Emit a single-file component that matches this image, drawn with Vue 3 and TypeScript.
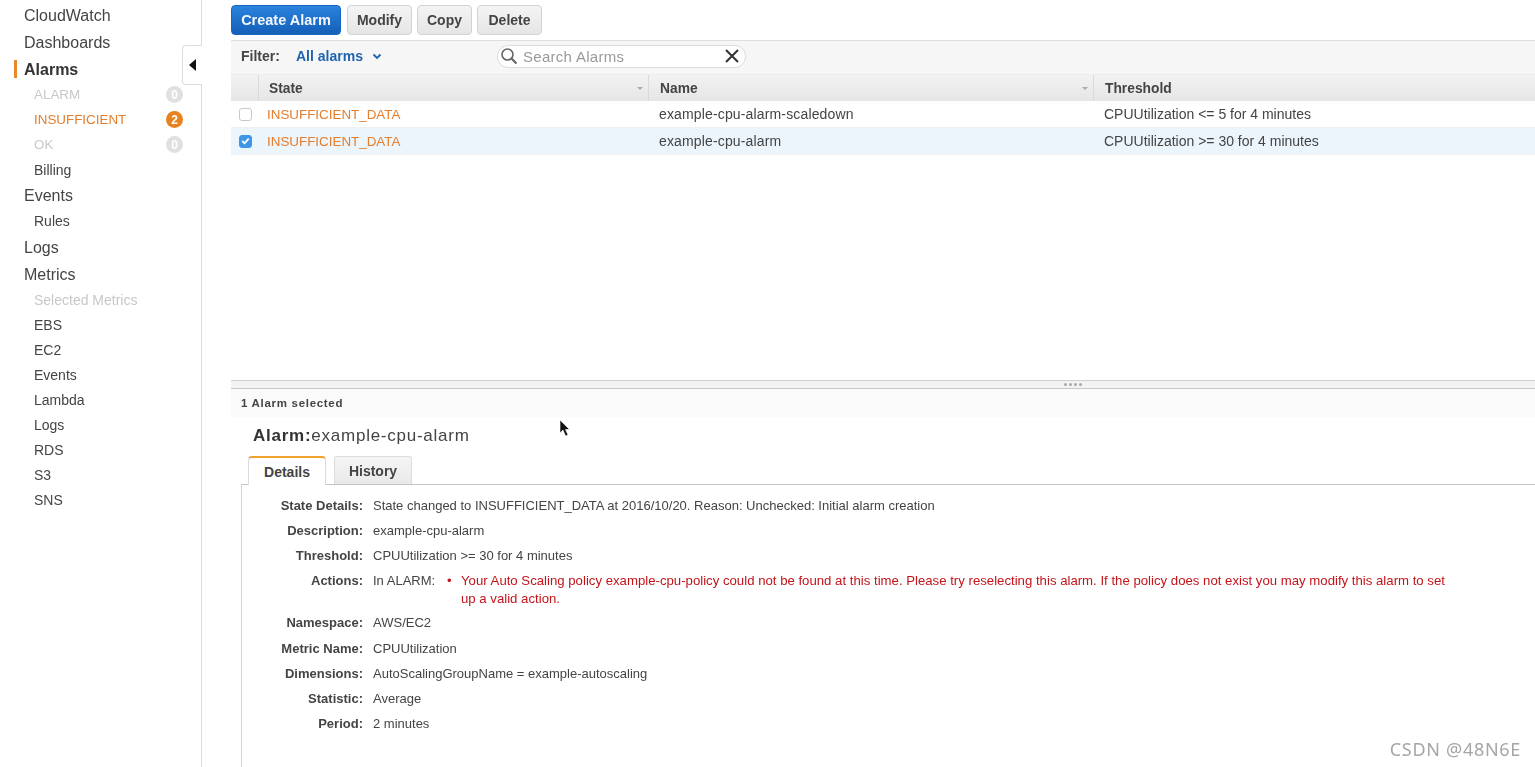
<script setup lang="ts">
interface Nav { label: string; kind: string; badge?: string }
const nav: Nav[] = [
  { label: 'CloudWatch', kind: 'top' },
  { label: 'Dashboards', kind: 'top' },
  { label: 'Alarms', kind: 'top low cur' },
  { label: 'ALARM', kind: 'sub muted caps', badge: '0' },
  { label: 'INSUFFICIENT', kind: 'sub warn caps', badge: '2' },
  { label: 'OK', kind: 'sub muted caps', badge: '0' },
  { label: 'Billing', kind: 'sub' },
  { label: 'Events', kind: 'top low' },
  { label: 'Rules', kind: 'sub high' },
  { label: 'Logs', kind: 'top low' },
  { label: 'Metrics', kind: 'top low' },
  { label: 'Selected Metrics', kind: 'sub high muted' },
  { label: 'EBS', kind: 'sub high' },
  { label: 'EC2', kind: 'sub high' },
  { label: 'Events', kind: 'sub high' },
  { label: 'Lambda', kind: 'sub high' },
  { label: 'Logs', kind: 'sub high' },
  { label: 'RDS', kind: 'sub high' },
  { label: 'S3', kind: 'sub high' },
  { label: 'SNS', kind: 'sub high' },
]
const alarms = [
  { name: 'example-cpu-alarm-scaledown', threshold: 'CPUUtilization <= 5 for 4 minutes', selected: false },
  { name: 'example-cpu-alarm', threshold: 'CPUUtilization >= 30 for 4 minutes', selected: true },
]
const before = [
  { k: 'State Details:', v: 'State changed to INSUFFICIENT_DATA at 2016/10/20. Reason: Unchecked: Initial alarm creation' },
  { k: 'Description:', v: 'example-cpu-alarm' },
  { k: 'Threshold:', v: 'CPUUtilization >= 30 for 4 minutes' },
]
const after = [
  { k: 'Namespace:', v: 'AWS/EC2' },
  { k: 'Metric Name:', v: 'CPUUtilization' },
  { k: 'Dimensions:', v: 'AutoScalingGroupName = example-autoscaling' },
  { k: 'Statistic:', v: 'Average' },
  { k: 'Period:', v: '2 minutes' },
]
</script>

<template>
  <div class="page">
    <aside class="sidebar">
      <div v-for="(n, i) in nav" :key="i" class="nav" :class="n.kind">
        <span>{{ n.label }}</span>
        <span v-if="n.badge" class="badge">{{ n.badge }}</span>
      </div>
      <div class="collapse"><i class="tri"></i></div>
    </aside>

    <main class="main">
      <div class="toolbar">
        <button class="btn primary">Create Alarm</button>
        <button class="btn modify">Modify</button>
        <button class="btn copy">Copy</button>
        <button class="btn delete">Delete</button>
      </div>

      <div class="filter">
        <b class="flabel">Filter:</b>
        <span class="fvalue">All alarms</span>
        <svg class="chev" width="10" height="7" viewBox="0 0 10 7"><path d="M1.5 1.5 5 5l3.500-3.500" fill="none" stroke="#1f63b0" stroke-width="1.800"/></svg>
        <div class="search">
          <svg width="18" height="18" viewBox="0 0 18 18"><circle cx="7.500" cy="7.500" r="5.500" fill="none" stroke="#666" stroke-width="1.600"/><path d="m11.500 11.500 5 5" stroke="#666" stroke-width="2.200"/></svg>
          <span class="ph">Search Alarms</span>
          <svg class="x" width="14" height="14" viewBox="0 0 14 14"><path d="m1 1 12 12M13 1 1 13" stroke="#333" stroke-width="2"/></svg>
        </div>
      </div>

      <div class="thead">
        <div class="c0"></div>
        <div class="c1 th">State<i class="sort"></i></div>
        <div class="c2 th">Name<i class="sort"></i></div>
        <div class="c3 th">Threshold</div>
      </div>
      <div v-for="a in alarms" :key="a.name" class="row" :class="{ sel: a.selected }">
        <div class="c0">
          <span class="check" :class="{ on: a.selected }">
            <svg v-if="a.selected" width="12" height="12" viewBox="0 0 12 12"><path d="m2.500 6 2.500 2.500 4.500-5" fill="none" stroke="#fff" stroke-width="2"/></svg>
          </span>
        </div>
        <div class="c1 state">INSUFFICIENT_DATA</div>
        <div class="c2 name">{{ a.name }}</div>
        <div class="c3 thr">{{ a.threshold }}</div>
      </div>

      <div class="spacer"></div>

      <div class="splitter"><span class="grip"><i></i><i></i><i></i><i></i></span></div>
      <div class="selected-bar">1 Alarm selected</div>

      <h2 class="title"><b>Alarm:</b>example-cpu-alarm</h2>
      <div class="tabs">
        <div class="tab on">Details</div>
        <div class="tab">History</div>
      </div>

      <section class="panel">
        <div v-for="d in before" :key="d.k" class="kv">
          <b>{{ d.k }}</b><span>{{ d.v }}</span>
        </div>
        <div class="kv actions">
          <b>Actions:</b>
          <span class="in">In ALARM:</span>
          <span class="dot">•</span>
          <span class="err">Your Auto Scaling policy example-cpu-policy could not be found at this time. Please try reselecting this alarm. If the policy does not exist you may modify this alarm to set up a valid action.</span>
        </div>
        <div v-for="d in after" :key="d.k" class="kv">
          <b>{{ d.k }}</b><span>{{ d.v }}</span>
        </div>
      </section>
    </main>

    <svg class="cursor" width="12" height="19" viewBox="0 0 12 19"><path d="M1 1v13l3-3 2.500 6 2.500-1-2.500-5.500H10.500z" fill="#111" stroke="#fff" stroke-width=".6"/></svg>
    <div class="watermark">CSDN @48N6E</div>
  </div>
</template>

<style>
html, body { margin: 0; background: #fff; overflow: hidden; }
</style>

<style scoped>
.page {
  position: relative; display: flex; height: 767px; width: 1535px; overflow: hidden;
  font-family: "Liberation Sans", Arial, sans-serif; color: #333; background: #fff;
}
.sidebar {
  position: relative; box-sizing: border-box; width: 202px; flex: none;
  border-right: 1px solid #dcdcdc; padding-top: 2px; filter: blur(.35px);
}
.nav { display: flex; align-items: center; justify-content: space-between; box-sizing: border-box; }
.top { height: 27px; padding: 0 18px 0 24px; font-size: 16px; color: #444; }
.sub { height: 25px; padding: 0 18px 0 34px; font-size: 14px; color: #444; }
.low { padding-top: 1px; }
.high { padding-bottom: 2px; }
.caps { font-size: 13.400px; }
.cur { position: relative; font-weight: 700; color: #333; height: 26px; }
.cur::before { content: ""; position: absolute; left: 14px; top: 4px; width: 3px; height: 18px; background: #e8882a; }
.muted { color: #c8c8c8; }
.warn { color: #e47d2c; }
.badge {
  width: 17px; height: 17px; border-radius: 50%; background: #e0e0e0; color: #fff;
  font-size: 12px; font-weight: 700; display: flex; align-items: center; justify-content: center;
}
.warn .badge { background: #e8821e; }
.collapse {
  position: absolute; left: 182px; top: 45px; width: 20px; height: 40px; box-sizing: border-box;
  background: #fff; border: 1px solid #dcdcdc; border-right: 0; border-radius: 4px 0 0 4px;
  display: flex; align-items: center; justify-content: center;
}
.tri { border-style: solid; border-width: 6px 7px 6px 0; border-color: transparent #111 transparent transparent; }

.main { flex: 1; min-width: 0; padding-left: 29px; display: flex; flex-direction: column; filter: blur(.35px); }
.toolbar { display: flex; padding-top: 5px; box-sizing: border-box; height: 40px; }
.btn {
  height: 30px; padding: 0; border: 1px solid #d2d2d2; border-radius: 4px;
  font: 700 14px "Liberation Sans", Arial, sans-serif; color: #444;
  background: linear-gradient(#f4f4f4, #e6e6e6);
}
.primary {
  width: 110px; color: #f4f8fd; border-color: #1766c2; font-size: 14.500px;
  background: linear-gradient(#2a83dc, #145fb8);
}
.modify { width: 65px; margin-left: 6px; }
.copy { width: 55px; margin-left: 5px; }
.delete { width: 65px; margin-left: 5px; }

.filter {
  height: 34px; box-sizing: border-box; display: flex; align-items: center; padding: 0 0 3px 10px;
  background: #f6f6f6; border-top: 1px solid #dedede; font-size: 14px;
}
.flabel { width: 55px; color: #444; }
.fvalue { color: #1f63b0; font-weight: 700; }
.chev { margin-left: 9px; }
.search {
  margin-left: 115px; width: 249px; height: 23px; box-sizing: border-box; background: #fff;
  border: 1px solid #dcdcdc; border-radius: 11px; display: flex; align-items: center; padding: 0 5px 0 2px;
}
.ph { margin-left: 5px; color: #9a9a9a; font-size: 15px; flex: 1; letter-spacing: .3px; }
.x { margin-right: 1px; }

.thead {
  display: flex; height: 27px; align-items: center; background: linear-gradient(#f2f2f2, #e5e5e5);
  font-size: 13.800px; box-sizing: border-box; border-top: 1px solid #ececec;
}
.row { display: flex; height: 27px; align-items: center; box-sizing: border-box; font-size: 14px; border-bottom: 1px solid #edf0f3; }
.row.sel { background: #edf5fc; }
.c0 { width: 27px; flex: none; display: flex; justify-content: center; height: 100%; align-items: center; padding-left: 2px; box-sizing: border-box; }
.c1 { width: 390px; flex: none; box-sizing: border-box; padding-left: 10px; }
.c2 { width: 445px; flex: none; box-sizing: border-box; padding-left: 11px; }
.c3 { flex: 1; box-sizing: border-box; padding-left: 11px; }
.row .c1 { padding-left: 9px; }
.th {
  position: relative; font-weight: 700; color: #444; height: 100%; display: flex; align-items: center;
  border-left: 1px solid #dadada;
}
.sort {
  position: absolute; right: 5px; top: 12px; border-style: solid; border-width: 3px 3px 0;
  border-color: #aaa transparent transparent;
}
.state { color: #e47d2c; font-size: 13.400px; }
.name { color: #444; letter-spacing: .15px; }
.thr { color: #444; }
.check {
  width: 13px; height: 13px; box-sizing: border-box; border: 1px solid #c8c8c8; border-radius: 3px;
  background: #fff; display: flex; align-items: center; justify-content: center;
}
.check.on { background: #3d97e6; border-color: #3d97e6; }

.spacer { flex: none; height: 225px; }
.splitter {
  height: 9px; box-sizing: border-box; background: #f3f3f3; border-top: 1px solid #d0d0d0;
  border-bottom: 1px solid #c8c8c8; display: flex; align-items: center;
}
.grip { display: flex; gap: 2px; margin-left: 833px; }
.grip i { width: 3px; height: 3px; border-radius: 50%; background: #aaa; }
.selected-bar {
  height: 28px; box-sizing: border-box; background: #fafafa; padding: 0 0 1px 10px;
  display: flex; align-items: center; font-size: 11.500px; font-weight: 700; color: #444; letter-spacing: .7px;
}
.title { margin: 9px 0 0 22px; font-size: 17px; font-weight: 400; color: #444; line-height: 20px; letter-spacing: .75px; }
.title b { color: #333; }
.tabs { display: flex; gap: 8px; margin: 10px 0 0 17px; height: 28px; }
.tab {
  box-sizing: border-box; height: 28px; display: flex; align-items: center; justify-content: center;
  font-size: 14px; font-weight: 700; color: #444; border: 1px solid #dcdcdc; border-bottom: 0;
  border-radius: 3px 3px 0 0; background: linear-gradient(#f5f5f5, #e9e9e9); width: 78px;
}
.tab.on {
  background: #fff; border-top: 2px solid #f0a12e; position: relative;
  border-radius: 4px 4px 0 0; margin-bottom: -1px; height: 29px; z-index: 1;
}
.panel {
  flex: 1; margin-left: 10px; box-sizing: border-box; border-top: 1px solid #c4c4c4;
  border-left: 1px solid #d4d4d4; padding-top: 8px; font-size: 13px;
}
.kv { display: flex; min-height: 25px; line-height: 25px; color: #444; }
.kv b { width: 121px; flex: none; text-align: right; margin-right: 10px; color: #444; font-size: 13px; }
.actions { line-height: 18px; min-height: 42px; padding-top: 4px; box-sizing: border-box; }
.actions b { line-height: 18px; }
.actions + .kv { min-height: 26px; }
.in { width: 74px; flex: none; }
.dot { width: 14px; flex: none; color: #c3141a; }
.err { color: #c3141a; width: 990px; flex: none; font-size: 13.200px; }

.cursor { position: absolute; left: 559px; top: 419px; }
.watermark { position: absolute; right: 14px; top: 737px; font: 18px "Noto Sans", sans-serif; color: #a6a6a6; letter-spacing: .7px; }
</style>
